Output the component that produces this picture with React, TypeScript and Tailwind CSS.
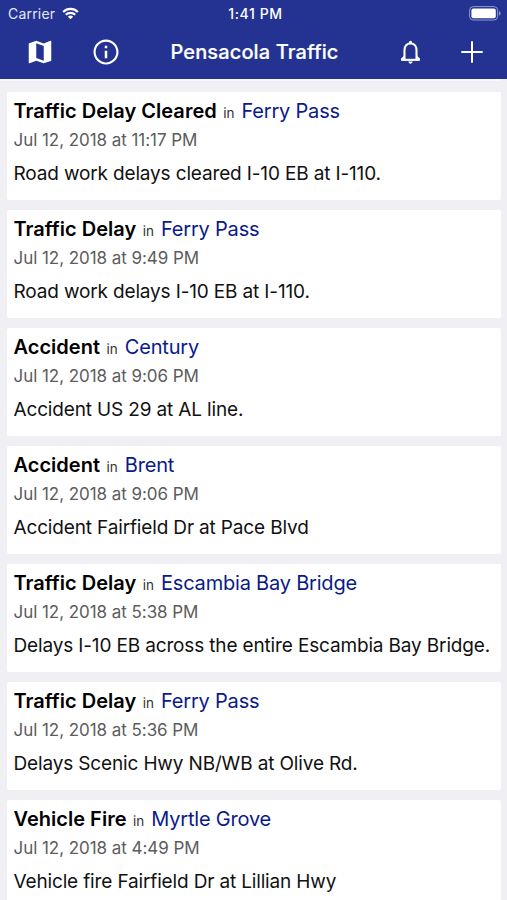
type Incident = {
  kind: string
  place: string
  date: string
  text: string
}

const incidents: Incident[] = [
  { kind: 'Traffic Delay Cleared', place: 'Ferry Pass', date: 'Jul 12, 2018 at 11:17 PM', text: 'Road work delays cleared I-10 EB at I-110.' },
  { kind: 'Traffic Delay', place: 'Ferry Pass', date: 'Jul 12, 2018 at 9:49 PM', text: 'Road work delays I-10 EB at I-110.' },
  { kind: 'Accident', place: 'Century', date: 'Jul 12, 2018 at 9:06 PM', text: 'Accident US 29 at AL line.' },
  { kind: 'Accident', place: 'Brent', date: 'Jul 12, 2018 at 9:06 PM', text: 'Accident Fairfield Dr at Pace Blvd' },
  { kind: 'Traffic Delay', place: 'Escambia Bay Bridge', date: 'Jul 12, 2018 at 5:38 PM', text: 'Delays I-10 EB across the entire Escambia Bay Bridge.' },
  { kind: 'Traffic Delay', place: 'Ferry Pass', date: 'Jul 12, 2018 at 5:36 PM', text: 'Delays Scenic Hwy NB/WB at Olive Rd.' },
  { kind: 'Vehicle Fire', place: 'Myrtle Grove', date: 'Jul 12, 2018 at 4:49 PM', text: 'Vehicle fire Fairfield Dr at Lillian Hwy' },
]

function StatusBar() {
  return (
    <div className="grid h-[27px] grid-cols-3 items-center pl-2 pr-[6px] text-[14px] leading-[27px]">
      <div className="flex items-center gap-[7px]">
        <span className="tracking-[0.2px] text-[#e4e8fa]">Carrier</span>
        <svg viewBox="0 0 18 13" className="h-[13px] w-[17px]" fill="none" stroke="white" strokeWidth="2.3">
          <path d="M1.2 4.9a11 11 0 0 1 15.6 0" />
          <path d="M4 7.9a7.1 7.1 0 0 1 10 0" />
          <path d="M9 12.6 6.2 9.9a4 4 0 0 1 5.6 0z" fill="white" stroke="none" />
        </svg>
      </div>
      <span className="pl-[2px] text-center text-[14px] font-medium tracking-[0.6px]">1:41 PM</span>
      <svg viewBox="0 0 32 15" className="h-[15px] w-8 justify-self-end">
        <rect x="0.6" y="0.6" width="28" height="13.4" rx="3.6" fill="none" stroke="#8f9ad4" strokeWidth="1" />
        <rect x="2.4" y="2.4" width="24.4" height="9.8" rx="2" fill="white" />
        <path d="M30 5v4.6c1-.4 1.6-1.3 1.6-2.3S31 5.4 30 5z" fill="#8f9ad4" />
      </svg>
    </div>
  )
}

function NavBar() {
  return (
    <div className="flex h-[50px] items-center px-6">
      <svg viewBox="0 0 24 24" className="ml-[1px] size-[30px]" fill="white">
        <path d="M20.5 3l-.16.03L15 5.1 9 3 3.36 4.9c-.21.07-.36.25-.36.48V20.5c0 .28.22.5.5.5l.16-.03L9 18.9l6 2.1 5.64-1.9c.21-.07.36-.25.36-.48V3.5c0-.28-.22-.5-.5-.5zM15 19l-6-2.11V5l6 2.11V19z" />
      </svg>
      <svg viewBox="0 0 24 24" className="ml-[36px] size-[30px]" fill="white">
        <path d="M11 7h2v2h-2zm0 4h2v6h-2zm1-9C6.48 2 2 6.48 2 12s4.48 10 10 10 10-4.48 10-10S17.52 2 12 2zm0 18.3c-4.57 0-8.3-3.73-8.3-8.3s3.73-8.3 8.3-8.3 8.3 3.73 8.3 8.3-3.73 8.3-8.3 8.3z" />
      </svg>
      <h1 className="flex-1 pr-[12px] text-center text-[20px] font-medium tracking-[0.12px] [-webkit-text-stroke:0.2px_white]">
        Pensacola Traffic
      </h1>
      <svg viewBox="0 0 22 26" className="mr-[40px] h-[25px] w-[21px]" fill="none" stroke="white" strokeWidth="2.2">
        <path d="M4.7 19.8V10.5C4.7 6.3 7.2 3.6 11 3.6s6.3 2.7 6.3 6.9v9.3" />
        <path d="M1.2 20.7h19.6" />
        <path d="M1.6 20.4 4.7 17.5M20.4 20.4l-3.1-2.9" />
        <path d="M9.3 3.4V2.5a1.7 1.7 0 0 1 3.4 0v.9zM8.8 22.5h4.4a2.2 2.2 0 0 1-4.4 0z" fill="white" stroke="none" />
      </svg>
      <svg viewBox="0 0 22 22" className="size-[22px]" stroke="white" strokeWidth="2">
        <path d="M11 0.3v21.4M0.3 11h21.4" />
      </svg>
    </div>
  )
}

function IncidentCard({ kind, place, date, text }: Incident) {
  return (
    <article className="h-[108px] shrink-0 rounded-[2px] bg-white px-[6.5px] pt-[6px] whitespace-nowrap">
      <h2 className="flex items-baseline text-[20px] leading-[26px]">
        <span className="font-semibold tracking-[0.02px] text-black">{kind}</span>
        <span className="mr-[7px] ml-[6.5px] text-[13.5px] text-[#333]">in</span>
        <span className="tracking-[-0.2px] text-[#0a1a8a]">{place}</span>
      </h2>
      <p className="mt-[3px] text-[17px] leading-[22px] tracking-[-0.05px] text-[#5c5c5c]">{date}</p>
      <p className="mt-[10px] text-[19px] leading-[26px] tracking-[-0.15px] text-[#111]">{text}</p>
    </article>
  )
}

export default function App() {
  return (
    <div className="flex h-[900px] w-[507px] flex-col overflow-hidden bg-[#efeff4] font-['Inter',sans-serif]">
      <header className="h-[79px] shrink-0 bg-[#243391] text-white">
        <StatusBar />
        <NavBar />
      </header>
      <div className="mr-[6px] h-[2px] shrink-0 bg-[#f8f8fb]" />
      <main className="flex min-h-0 flex-1 flex-col gap-[10px] overflow-hidden pt-[11px] pr-[6px] pl-[7px]">
        {incidents.map((incident) => (
          <IncidentCard key={incident.date + incident.place} {...incident} />
        ))}
      </main>
    </div>
  )
}
